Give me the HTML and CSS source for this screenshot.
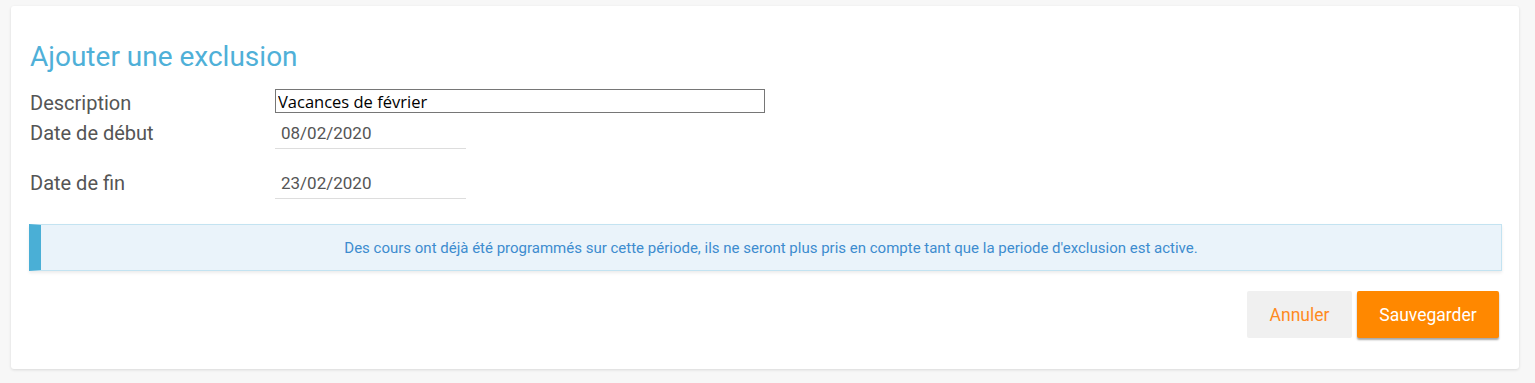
FILE: index.html
```html
<html>
  <head>
    <title>Ajouter une exclusion</title>
    <link rel="stylesheet" href="styles.css">
  </head>

  <body>
    <div class="card">
      <h2 class="title">Ajouter une exclusion</h2>

      <div class="form">
        <div class="row row-description">
          <label class="label">Description</label>
          <input class="text-input" type="text" value="Vacances de février"/>
        </div>

        <div class="row row-date">
          <label class="label">Date de début</label>
          <input class="date-input" type="text" value="08/02/2020"/>
        </div>

        <div class="row row-date row-end">
          <label class="label">Date de fin</label>
          <input class="date-input" type="text" value="23/02/2020"/>
        </div>
      </div>

      <div class="alert">
        Des cours ont déjà été programmés sur cette période, ils ne seront plus pris en compte tant que la periode d'exclusion est active.
      </div>

      <div class="actions">
        <button class="btn btn-cancel">Annuler</button>
        <button class="btn btn-save">Sauvegarder</button>
      </div>
    </div>
  </body>
</html>
```

FILE: styles.css
```css
*, *:before, *:after {
  box-sizing: border-box;
  padding: 0;
  margin: 0;
}

body {
  background-color: #f7f7f7;
  padding: 6px 16px 13px 11px;
  font-family: Roboto, "Liberation Sans", sans-serif;
}

.card {
  background-color: #fff;
  border-radius: 3px;
  box-shadow: 0 1px 3px rgba(0, 0, 0, 0.12);
  padding: 34px 17px 31px 18px;
}

.title {
  font-size: 28px;
  font-weight: 400;
  line-height: 34px;
  color: #4fb0d8;
  margin-left: 1px;
}

.form {
  margin-top: 15px;
}

.row {
  display: grid;
  grid-template-columns: 245px 1fr;
  align-items: center;
  margin-left: 1px;
}

.label {
  font-size: 20px;
  line-height: 24px;
  color: #555;
}

.row-description .label {
  position: relative;
  top: 2px;
}

.text-input {
  width: 490px;
  height: 24px;
  border: 1px solid #767676;
  padding: 0 2px;
  font-family: "Open Sans", sans-serif;
  font-size: 16.5px;
  color: #000;
  outline: none;
}

.row-date {
  margin-top: 5px;
  height: 31px;
}

.row-date .label {
  position: relative;
  top: -1px;
}

.row-end {
  margin-top: 19px;
}

.date-input {
  width: 191px;
  height: 31px;
  border: 0;
  border-bottom: 1px solid #ddd;
  padding: 0 6px 1px;
  font-family: Roboto, sans-serif;
  font-size: 17px;
  color: #555;
  outline: none;
}

.alert {
  margin-top: 25px;
  height: 47px;
  display: flex;
  align-items: center;
  justify-content: center;
  padding-top: 1px;
  background-color: #eaf3fa;
  border: 1px solid #c3e3f1;
  border-left: 12px solid #4aafd6;
  box-shadow: 0 2px 3px rgba(0, 0, 0, 0.08);
  font-size: 15px;
  color: #3d8ccf;
}

.actions {
  margin-top: 20px;
  display: flex;
  justify-content: flex-end;
  gap: 5px;
  padding-right: 3px;
}

.btn {
  height: 47px;
  border: 0;
  border-radius: 2px;
  font-family: Roboto, sans-serif;
  font-size: 17.5px;
  cursor: pointer;
}

.btn-cancel {
  width: 105px;
  background-color: #f0f0f0;
  color: #ff8a1f;
}

.btn-save {
  width: 142px;
  background-color: #ff8800;
  color: #fff;
  box-shadow: 0 2px 2px rgba(0, 0, 0, 0.35);
}
```
